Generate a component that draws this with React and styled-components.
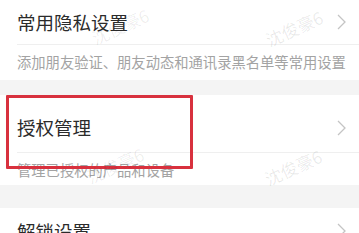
import React from "react";
import styled, { createGlobalStyle } from "styled-components";

const Global = createGlobalStyle`
  html, body { margin: 0; padding: 0; background: #f4f4f4; }
  body { font-family: "Noto Sans CJK SC", "Noto Sans", sans-serif; }
`;

const Page = styled.div`
  position: relative;
  width: 359px;
  height: 233px;
  overflow: hidden;
  background: #f4f4f4;
  display: flex;
  flex-direction: column;
`;

const Card = styled.div`
  background: #ffffff;
  display: flex;
  flex-direction: column;
`;

const Band = styled.div`
  height: ${(p) => p.$h}px;
  flex: none;
`;

const TitleRow = styled.div`
  box-sizing: border-box;
  height: ${(p) => p.$h}px;
  padding: ${(p) => p.$pt || 0}px 13px 0 17px;
  display: flex;
  align-items: center;
  justify-content: space-between;
  flex: none;
`;

const Title = styled.span`
  font-size: 18.5px;
  line-height: 1;
  color: #2b2b2b;
  white-space: nowrap;
`;

const Desc = styled.div`
  box-sizing: border-box;
  height: ${(p) => p.$h}px;
  margin-left: 17px;
  padding-top: ${(p) => p.$pt || 0}px;
  border-top: 1px solid #efefef;
  display: flex;
  align-items: center;
  font-size: 14.3px;
  line-height: 1;
  color: #a3a3a3;
  white-space: nowrap;
  flex: none;
`;

const Chevron = styled.svg`
  width: 9px;
  height: 16px;
  flex: none;
`;

const Highlight = styled.div`
  position: absolute;
  left: 6px;
  top: 95px;
  width: 187px;
  height: 74px;
  box-sizing: border-box;
  border: 3px solid #d8313e;
  border-radius: 1px;
  pointer-events: none;
`;

const Watermark = styled.span`
  position: absolute;
  left: ${(p) => p.$x}px;
  top: ${(p) => p.$y}px;
  transform: translate(-50%, -50%) rotate(-24deg);
  font-size: 17px;
  line-height: 1;
  color: rgba(0, 0, 0, ${(p) => p.$a});
  white-space: nowrap;
  pointer-events: none;
`;

const Arrow = () => (
  <Chevron viewBox="0 0 9 16">
    <path d="M1 1 L8 8 L1 15" fill="none" stroke="#c4c4c4" strokeWidth="1.3" />
  </Chevron>
);

export default function App() {
  return (
    <>
      <Global />
      <Page>
        <Card>
          <TitleRow $h={44} $pt={0}>
            <Title>常用隐私设置</Title>
            <Arrow />
          </TitleRow>
          <Desc $h={36} $pt={0}>添加朋友验证、朋友动态和通讯录黑名单等常用设置</Desc>
        </Card>
        <Band $h={15} />
        <Card>
          <TitleRow $h={57} $pt={8}>
            <Title>授权管理</Title>
            <Arrow />
          </TitleRow>
          <Desc $h={33} $pt={3}>管理已授权的产品和设备</Desc>
        </Card>
        <Band $h={23} />
        <Card>
          <TitleRow $h={46} $pt={0}>
            <Title>解锁设置</Title>
            <Arrow />
          </TitleRow>
        </Card>
        <Highlight />
        <Watermark $x={120} $y={26} $a={0.07}>沈俊豪6</Watermark>
        <Watermark $x={294} $y={28} $a={0.09}>沈俊豪6</Watermark>
        <Watermark $x={115} $y={165} $a={0.07}>沈俊豪6</Watermark>
        <Watermark $x={293} $y={167} $a={0.09}>沈俊豪6</Watermark>
      </Page>
    </>
  );
}
